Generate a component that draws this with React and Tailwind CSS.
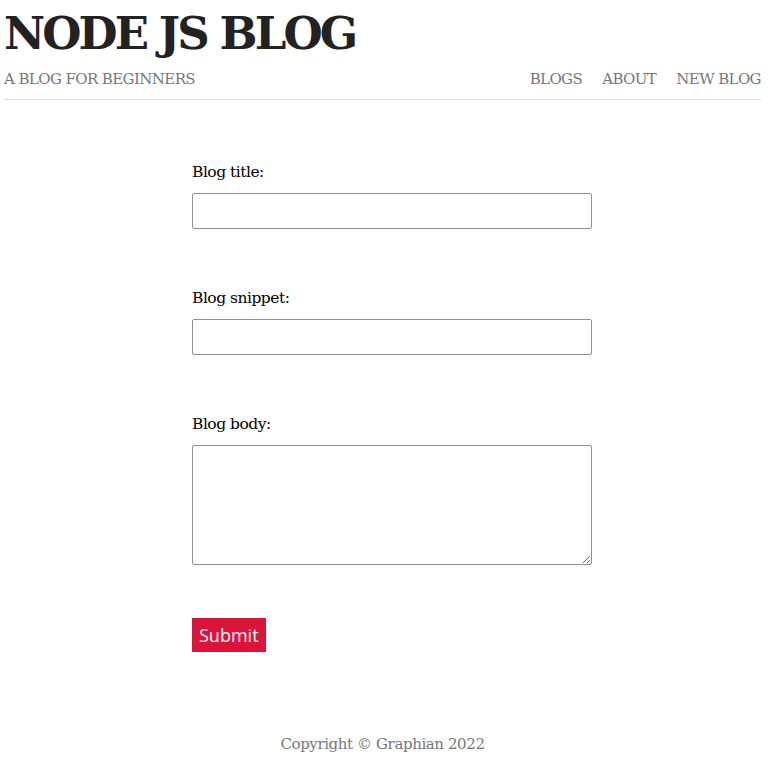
import React from 'react';

const serif = { fontFamily: '"DejaVu Serif", "Liberation Serif", serif' };

const fields = [
  { label: 'Blog title:', kind: 'input' },
  { label: 'Blog snippet:', kind: 'input' },
  { label: 'Blog body:', kind: 'textarea' },
];

const App = () => (
  <div className="min-h-screen bg-white px-[4px] text-[#222]" style={serif}>
    <header className="border-b border-[#ddd] pb-[8px] w-[757px]">
      <h1 className="text-[45px] font-bold leading-[62px] tracking-[-2.9px] mt-[3px]">NODE JS BLOG</h1>
      <div className="flex items-center justify-between text-[15px] text-[#777] tracking-[-0.6px] leading-6 mt-[2px]">
        <p>A BLOG FOR BEGINNERS</p>
        <nav className="flex gap-5">
          <a href="#">BLOGS</a>
          <a href="#">ABOUT</a>
          <a href="#">NEW BLOG</a>
        </nav>
      </div>
    </header>

    <form className="w-[400px] ml-[188px] pt-[60px]" onSubmit={(e) => e.preventDefault()}>
      {fields.map((f) => (
        <div key={f.label} className="mb-[57px]">
          <label className="block text-[15.5px] leading-6 text-black tracking-[-0.5px]">{f.label}</label>
          {f.kind === 'input' ? (
            <input
              type="text"
              className="mt-[9px] block w-full h-[36px] border border-[#8f8f9d] rounded-[2px] bg-white"
            />
          ) : (
            <textarea className="mt-[9px] block w-full h-[120px] border border-[#8f8f9d] rounded-[2px] bg-white resize-y" />
          )}
        </div>
      ))}
      <button
        type="submit"
        className="-mt-[4px] block bg-[#dc143c] text-white text-[18px] leading-[34px] px-[7px] h-[34px]"
        style={{ fontFamily: '"Open Sans", "Noto Sans", sans-serif' }}
      >
        Submit
      </button>
    </form>

    <footer className="text-center text-[15px] leading-6 text-[#777] tracking-[-0.4px] mt-[80px] w-[757px]">
      Copyright © Graphian 2022
    </footer>
  </div>
);

export default App;
